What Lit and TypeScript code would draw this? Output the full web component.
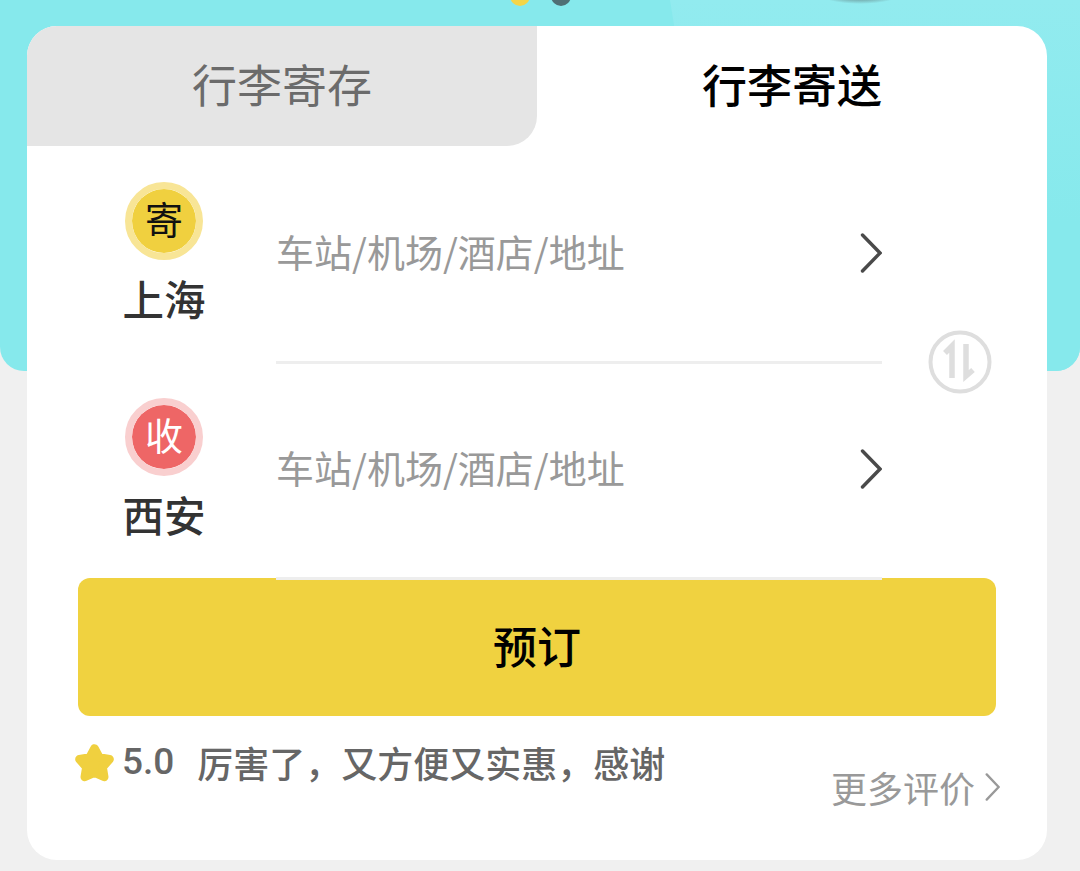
import { LitElement, html, css } from "lit";
import { customElement } from "lit/decorators.js";

const chevron = (w: number, h: number, cls: string) => html`<svg class=${cls} width=${w} height=${h} viewBox="0 0 22 40" fill="none" preserveAspectRatio="none"><path d="M2.5 2 L20 20 L2.5 38" stroke="currentColor" stroke-width="3.4" stroke-linecap="round" stroke-linejoin="miter"/></svg>`;

@customElement("app-root")
export class AppRoot extends LitElement {
  static styles = css`
    :host {
      display: grid;
      width: 1080px;
      height: 871px;
      overflow: hidden;
      background: #f0f0f0;
      font-family: "Noto Sans CJK SC", sans-serif;
    }
    .banner, .content { grid-area: 1 / 1; }
    .banner {
      height: 371px;
      border-radius: 0 0 24px 24px;
      background: #86e9ec;
      position: relative;
      overflow: hidden;
    }
    .glow {
      position: absolute; left: 670px; right: 0; top: 0; height: 371px;
      background: linear-gradient(180deg, #92ebef, #86e9ec 60%);
      clip-path: polygon(0 0, 100% 0, 100% 100%, 60px 100%);
    }
    .dot { position: absolute; border-radius: 50%; }
    .dot.y { left: 510px; top: -14px; width: 20px; height: 20px; background: #f3d548; }
    .dot.d { left: 551px; top: -14px; width: 20px; height: 20px; background: #4f6f74; }
    .blob { position: absolute; left: 815px; top: -22px; width: 90px; height: 26px; border-radius: 50%; background: radial-gradient(closest-side, #5f7f80 40%, rgba(120,170,170,0)); }
    .content { padding: 26px 33px 11px 27px; }
    .card {
      height: 834px;
      box-sizing: border-box;
      background: #fff;
      border-radius: 30px;
      overflow: hidden;
      position: relative;
    }
    .tabs { display: grid; grid-template-columns: 510px 1fr; height: 120px; }
    .tab { display: flex; align-items: center; justify-content: center; font-size: 45px; line-height: 1; padding-bottom: 5px; }
    .tab.off { background: #e5e5e5; color: #6b6b6b; border-radius: 0 0 30px 0; }
    .tab.on { color: #000; font-weight: 500; }
    .rows { position: relative; z-index: 1; padding: 2px 165px 0 51px; }
    .row { display: grid; grid-template-columns: 172px 1fr; column-gap: 26px; height: 216px; }
    .place { display: flex; flex-direction: column; align-items: center; padding-top: 34px; }
    .badge {
      box-sizing: border-box;
      width: 78px; height: 78px;
      border-radius: 50%;
      border: 7px solid;
      display: flex; align-items: center; justify-content: center;
      font-size: 38px; line-height: 1;
      padding-bottom: 6px;
    }
    .badge.send { background: #f0d03f; border-color: #f8e596; color: #111; background-clip: padding-box; }
    .badge.recv { background: #ee6666; border-color: #f9cfcf; color: #fff; background-clip: padding-box; }
    .city { font-size: 41.5px; line-height: 1; color: #333; font-weight: 500; margin-top: 18px; }
    .field {
      display: flex; align-items: center; justify-content: space-between;
      border-bottom: 3px solid #eeeeee;
      color: #999;
      font-size: 38px;
      line-height: 1;
    }
    .field span { margin-top: -7px; }
    .arrow { color: #4a4a4a; margin-top: -3px; }
    .swap { position: absolute; left: 900px; top: 303px; z-index: 2; color: #dedede; }
    .book {
      height: 138px;
      box-sizing: border-box;
      margin: -2px 51px 0;
      padding-bottom: 4px;
      background: #f0d240;
      border-radius: 12px;
      display: flex; align-items: center; justify-content: center;
      font-size: 44px; font-weight: 500; color: #000; line-height: 1;
    }
    .foot { position: relative; padding: 0 47px 0 46px; height: 144px; }
    .review { display: flex; align-items: center; color: #666; font-size: 36px; line-height: 1; font-weight: 500; padding-top: 22px; }
    .star { flex: none; margin-right: 6px; margin-top: 4px; }
    .score { font-family: Roboto, sans-serif; font-weight: 500; font-size: 37px; margin-right: 23px; }
    .more { display: flex; align-items: center; justify-content: flex-end; color: #999; font-size: 36px; line-height: 1; margin-top: -16px; }
    .more svg { margin-left: 10px; }
  `;

  private renderRow(tag: string, cls: string, city: string) {
    return html`<div class="row">
      <div class="place"><div class="badge ${cls}">${tag}</div><div class="city">${city}</div></div>
      <div class="field"><span>车站/机场/酒店/地址</span>${chevron(22, 40, "arrow")}</div>
    </div>`;
  }

  render() {
    return html`
      <div class="banner"><i class="glow"></i><i class="dot y"></i><i class="dot d"></i><i class="blob"></i></div>
      <div class="content">
        <div class="card">
          <div class="tabs">
            <div class="tab off">行李寄存</div>
            <div class="tab on">行李寄送</div>
          </div>
          <div class="rows">
            ${this.renderRow("寄", "send", "上海")}
            ${this.renderRow("收", "recv", "西安")}
          </div>
          <svg class="swap" width="66" height="66" viewBox="0 0 66 66" fill="none">
            <circle cx="33" cy="33" r="29.5" stroke="currentColor" stroke-width="4"/>
            <path d="M25 49 V17 L18 24" stroke="currentColor" stroke-width="5.5"/>
            <path d="M39 15 V47 L46 41" stroke="currentColor" stroke-width="5.5"/>
          </svg>
          <div class="book">预订</div>
          <div class="foot">
            <div class="review">
              <svg class="star" width="43" height="43" viewBox="0 0 40 40">
                <path d="M20 6 L24.5 14.5 L34 16 L27.5 23.5 L29 32.5 L20 28.5 L11 32.5 L12.5 23.5 L6 16 L15.5 14.5 Z" fill="#f0d03f" stroke="#f0d03f" stroke-width="8" stroke-linejoin="round"/>
              </svg>
              <span class="score">5.0</span><span>厉害了，又方便又实惠，感谢</span>
            </div>
            <div class="more"><span>更多评价</span>${chevron(15, 28, "")}</div>
          </div>
        </div>
      </div>
    `;
  }
}
